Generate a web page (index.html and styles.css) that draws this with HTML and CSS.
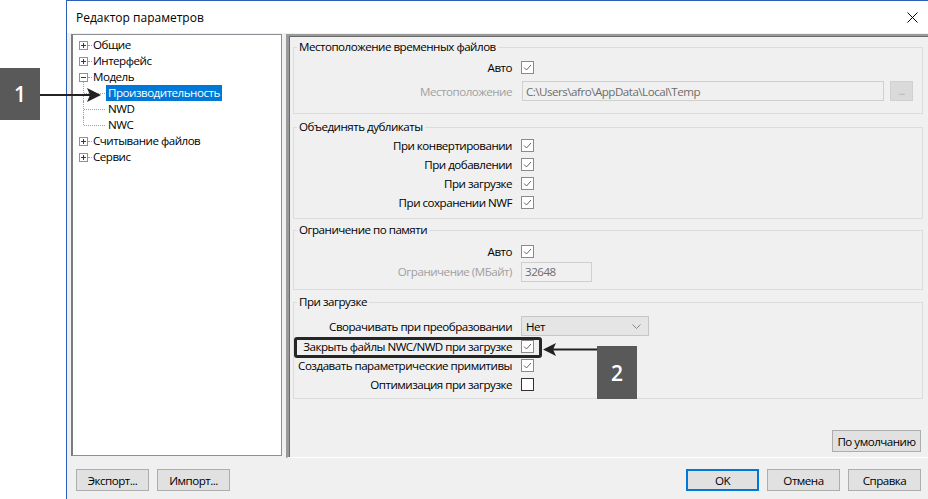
FILE: index.html
```html
<!DOCTYPE html>
<html lang="ru">
<head>
<meta charset="utf-8">
<title>Редактор параметров</title>
<link rel="stylesheet" href="styles.css">
</head>
<body>
<div class="dialog">
  <div class="titlebar">
    <span class="title">Редактор параметров</span>
    <svg class="close" width="11" height="11" viewBox="0 0 11 11"><path d="M0.5 0.5L10.5 10.5M10.5 0.5L0.5 10.5" stroke="#000" stroke-width="1"/></svg>
  </div>
  <div class="main">
    <div class="tree">
      <div class="node"><svg class="exp" width="9" height="9" viewBox="0 0 9 9"><rect x=".5" y=".5" width="8" height="8" fill="#fff" stroke="#919191"/><path d="M2 4.5h5M4.5 2v5" stroke="#3a3a3a"/></svg><span class="conn"></span><span class="lbl">Общие</span></div>
      <div class="node"><svg class="exp" width="9" height="9" viewBox="0 0 9 9"><rect x=".5" y=".5" width="8" height="8" fill="#fff" stroke="#919191"/><path d="M2 4.5h5M4.5 2v5" stroke="#3a3a3a"/></svg><span class="conn"></span><span class="lbl">Интерфейс</span></div>
      <div class="node"><svg class="exp" width="9" height="9" viewBox="0 0 9 9"><rect x=".5" y=".5" width="8" height="8" fill="#fff" stroke="#919191"/><path d="M2 4.5h5" stroke="#3a3a3a"/></svg><span class="conn"></span><span class="lbl">Модель</span></div>
      <div class="children">
        <div class="child first"><span class="lbl sel">Производительность</span></div>
        <div class="child"><span class="lbl">NWD</span></div>
        <div class="child last"><span class="lbl">NWC</span></div>
      </div>
      <div class="node"><svg class="exp" width="9" height="9" viewBox="0 0 9 9"><rect x=".5" y=".5" width="8" height="8" fill="#fff" stroke="#919191"/><path d="M2 4.5h5M4.5 2v5" stroke="#3a3a3a"/></svg><span class="conn"></span><span class="lbl">Считывание файлов</span></div>
      <div class="node"><svg class="exp" width="9" height="9" viewBox="0 0 9 9"><rect x=".5" y=".5" width="8" height="8" fill="#fff" stroke="#919191"/><path d="M2 4.5h5M4.5 2v5" stroke="#3a3a3a"/></svg><span class="conn"></span><span class="lbl">Сервис</span></div>
    </div>

    <div class="panel">
      <fieldset class="grp g1">
        <legend>Местоположение временных файлов</legend>
        <div class="row">
          <span class="label">Авто</span>
          <span class="ctl"><svg class="cb" width="13" height="13" viewBox="0 0 13 13"><rect x=".5" y=".5" width="12" height="12" fill="#fff" stroke="#8a8a8a"/><path d="M3 6.5l2.5 2.5 4.5-5" fill="none" stroke="#666"/></svg></span>
        </div>
        <div class="row tall">
          <span class="label dis">Местоположение</span>
          <span class="ctl"><span class="input path">C:\Users\afro\AppData\Local\Temp</span><span class="browse">...</span></span>
        </div>
      </fieldset>

      <fieldset class="grp g2">
        <legend>Объединять дубликаты</legend>
        <div class="row">
          <span class="label">При конвертировании</span>
          <span class="ctl"><svg class="cb" width="13" height="13" viewBox="0 0 13 13"><rect x=".5" y=".5" width="12" height="12" fill="#fff" stroke="#8a8a8a"/><path d="M3 6.5l2.5 2.5 4.5-5" fill="none" stroke="#666"/></svg></span>
        </div>
        <div class="row">
          <span class="label">При добавлении</span>
          <span class="ctl"><svg class="cb" width="13" height="13" viewBox="0 0 13 13"><rect x=".5" y=".5" width="12" height="12" fill="#fff" stroke="#8a8a8a"/><path d="M3 6.5l2.5 2.5 4.5-5" fill="none" stroke="#666"/></svg></span>
        </div>
        <div class="row">
          <span class="label">При загрузке</span>
          <span class="ctl"><svg class="cb" width="13" height="13" viewBox="0 0 13 13"><rect x=".5" y=".5" width="12" height="12" fill="#fff" stroke="#8a8a8a"/><path d="M3 6.5l2.5 2.5 4.5-5" fill="none" stroke="#666"/></svg></span>
        </div>
        <div class="row">
          <span class="label">При сохранении NWF</span>
          <span class="ctl"><svg class="cb" width="13" height="13" viewBox="0 0 13 13"><rect x=".5" y=".5" width="12" height="12" fill="#fff" stroke="#8a8a8a"/><path d="M3 6.5l2.5 2.5 4.5-5" fill="none" stroke="#666"/></svg></span>
        </div>
      </fieldset>

      <fieldset class="grp g3">
        <legend>Ограничение по памяти</legend>
        <div class="row">
          <span class="label">Авто</span>
          <span class="ctl"><svg class="cb" width="13" height="13" viewBox="0 0 13 13"><rect x=".5" y=".5" width="12" height="12" fill="#fff" stroke="#8a8a8a"/><path d="M3 6.5l2.5 2.5 4.5-5" fill="none" stroke="#666"/></svg></span>
        </div>
        <div class="row mid">
          <span class="label dis">Ограничение (МБайт)</span>
          <span class="ctl"><span class="input num">32648</span></span>
        </div>
      </fieldset>

      <fieldset class="grp g4">
        <legend>При загрузке</legend>
        <div class="row tall">
          <span class="label">Сворачивать при преобразовании</span>
          <span class="ctl"><span class="select"><span>Нет</span><svg width="9" height="5" viewBox="0 0 9 5"><path d="M0.5 0.5L4.5 4.5L8.5 0.5" fill="none" stroke="#888"/></svg></span></span>
        </div>
        <div class="row">
          <span class="label">Закрыть файлы NWC/NWD при загрузке</span>
          <span class="ctl"><svg class="cb" width="13" height="13" viewBox="0 0 13 13"><rect x=".5" y=".5" width="12" height="12" fill="#fff" stroke="#8a8a8a"/><path d="M3 6.5l2.5 2.5 4.5-5" fill="none" stroke="#666"/></svg></span>
        </div>
        <div class="row">
          <span class="label">Создавать параметрические примитивы</span>
          <span class="ctl"><svg class="cb" width="13" height="13" viewBox="0 0 13 13"><rect x=".5" y=".5" width="12" height="12" fill="#fff" stroke="#8a8a8a"/><path d="M3 6.5l2.5 2.5 4.5-5" fill="none" stroke="#666"/></svg></span>
        </div>
        <div class="row">
          <span class="label">Оптимизация при загрузке</span>
          <span class="ctl"><svg class="cb" width="13" height="13" viewBox="0 0 13 13"><rect x=".5" y=".5" width="12" height="12" fill="#fff" stroke="#333"/></svg></span>
        </div>
      </fieldset>

      <div class="defaults"><span class="btn wide">По умолчанию</span></div>
    </div>
  </div>
  <div class="footer">
    <div class="btns">
      <span class="btn">Экспорт...</span>
      <span class="btn">Импорт...</span>
    </div>
    <div class="btns">
      <span class="btn ok">OK</span>
      <span class="btn">Отмена</span>
      <span class="btn">Справка</span>
    </div>
  </div>
</div>

<div class="callout c1">1</div>
<div class="callout c2">2</div>
<div class="highlight"></div>
<svg class="arrows" width="928" height="499" viewBox="0 0 928 499">
  <path d="M40 95H92" stroke="#222" stroke-width="2"/>
  <polygon points="87,88 101,95 87,102 90,95" fill="#222"/>
  <path d="M597 349.5H552" stroke="#222" stroke-width="2"/>
  <polygon points="556,343 543,349.5 556,356 553,349.5" fill="#222"/>
</svg>
</body>
</html>
```

FILE: styles.css
```css
* { box-sizing: border-box; }
html, body { margin: 0; padding: 0; }
body {
  width: 928px;
  height: 499px;
  background: #fff;
  font-family: "Open Sans", "Noto Sans", sans-serif;
  font-size: 11.6px;
  letter-spacing: -0.5px;
  color: #000;
  position: relative;
  overflow: hidden;
}

.dialog {
  margin-left: 66px;
  width: 862px;
  height: 499px;
  border-left: 1px solid #2d5fb8;
  border-top: 1px solid #2d5fb8;
  background: #f0f0f0;
  display: flex;
  flex-direction: column;
}

.titlebar {
  height: 32px;
  flex: none;
  background: #fff;
  display: flex;
  align-items: center;
  justify-content: space-between;
  padding: 0 10px 0 9px;
  font-size: 12px;
  letter-spacing: 0;
}
.close { display: block; margin-top: 1px; }

.main {
  height: 425px;
  flex: none;
  display: flex;
  gap: 4px;
  padding: 1px 0 0 4px;
}

/* tree */
.tree {
  width: 211px;
  height: 422px;
  flex: none;
  background: #fff;
  border: 1px solid #8d8f94;
  border-left: 2px solid #7c7c7c;
  padding: 2px 0 0 6px;
}
.node {
  display: flex;
  align-items: center;
  height: 16px;
}
.exp { display: block; flex: none; }
.conn {
  width: 4px;
  height: 0;
  border-top: 1px dotted #a0a0a0;
  flex: none;
}
.lbl {
  padding: 0 1px;
  line-height: 16px;
  height: 16px;
  white-space: nowrap;
}
.children { position: relative; }
.child {
  position: relative;
  display: flex;
  align-items: center;
  height: 16px;
  padding-left: 27px;
}
.child::before {
  content: "";
  position: absolute;
  left: 4px;
  top: 0;
  bottom: 0;
  border-left: 1px dotted #a0a0a0;
}
.child.first::before { top: -3px; }
.child.last::before { bottom: 8px; }
.child::after {
  content: "";
  position: absolute;
  left: 5px;
  width: 21px;
  top: 8px;
  border-top: 1px dotted #a0a0a0;
}
.child .lbl { padding: 0 2px; }
.lbl.sel { background: #0078d7; color: #fff; }

/* right panel */
.panel {
  width: 643px;
  height: 424px;
  flex: none;
  border-left: 3px solid #9a9a9a;
  border-top: 2px solid #9a9a9a;
  border-right: 1px solid #fff;
  border-bottom: 1px solid #fff;
  box-shadow: inset 1px 1px 0 #6a6a6a;
  padding: 3px 5px 5px 4px;
  display: flex;
  flex-direction: column;
}

.grp {
  margin: 0;
  padding: 0;
  border: 1px solid #dcdcdc;
  min-inline-size: 0;
}
.grp legend {
  padding: 0 2px;
  margin-left: 3px;
  line-height: 16px;
  height: 16px;
}
.g1 { padding: 3px 0 11px 0; }
.g2 { margin-top: 5px; padding: 1px 0 6px 0; }
.g3 { margin-top: 3px; padding: 4px 0 7px 0; }
.g4 { margin-top: 4px; padding: 5px 0 4px 0; }

.row {
  display: grid;
  grid-template-columns: 218px 1fr;
  column-gap: 9px;
  align-items: center;
  height: 19px;
}
.row.tall { height: 22px; }
.g1 .row.tall { margin-top: 3px; }
.row.mid { height: 21px; }
.label { text-align: right; white-space: nowrap; }
.label.dis { color: #a0a0a0; }
.ctl { display: flex; align-items: center; }
.cb { display: block; }

.input {
  height: 20px;
  border: 1px solid #cfcfcf;
  background: #f0f0f0;
  color: #6d6d6d;
  display: flex;
  align-items: center;
  padding-left: 3px;
}
.input.path { width: 362px; margin-left: 1px; }
.input.num { width: 71px; }
.browse {
  width: 23px;
  height: 20px;
  margin-left: 6px;
  background: #dadada;
  border: 1px solid #d0d0d0;
  color: #a8a8a8;
  display: flex;
  align-items: center;
  justify-content: center;
  font-size: 10px;
}
.select {
  width: 128px;
  height: 20px;
  background: #e5e5e5;
  border: 1px solid #c6c6c6;
  display: flex;
  align-items: center;
  justify-content: space-between;
  padding: 0 7px 0 4px;
}
.select svg { display: block; }

.defaults {
  margin-top: auto;
  display: flex;
  justify-content: flex-end;
  padding-right: 2px;
}

.btn {
  width: 73px;
  height: 22px;
  background: #e1e1e1;
  border: 1px solid #adadad;
  display: flex;
  align-items: center;
  justify-content: center;
  white-space: nowrap;
}
.btn.wide { width: 89px; }
.btn.ok { border: 2px solid #0078d7; }

.footer {
  height: 41px;
  flex: none;
  display: flex;
  justify-content: space-between;
  padding: 11px 7px 0 9px;
}
.btns { display: flex; gap: 8px; }

/* annotations */
.callout {
  position: absolute;
  width: 40px;
  background: #595959;
  color: #fff;
  font-size: 21px;
  font-weight: 600;
  letter-spacing: 0;
  display: flex;
  align-items: center;
  justify-content: center;
}
.c1 { left: 0; top: 68px; height: 52px; }
.c2 { left: 597px; top: 346px; height: 53px; }
.highlight {
  position: absolute;
  left: 294px;
  top: 337px;
  width: 248px;
  height: 21px;
  border: 3px solid #262626;
  border-radius: 3px;
}
.arrows {
  position: absolute;
  left: 0;
  top: 0;
  pointer-events: none;
}
```
